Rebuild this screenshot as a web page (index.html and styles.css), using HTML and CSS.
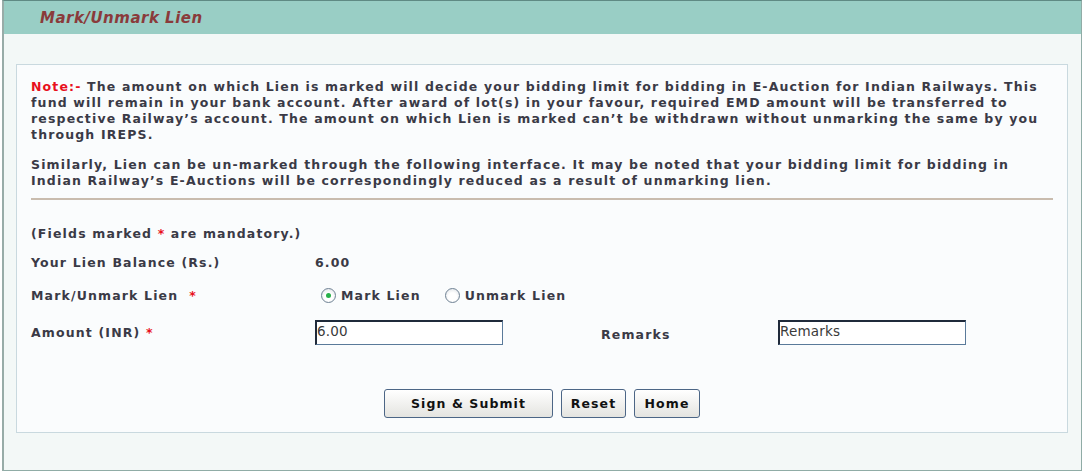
FILE: index.html
```html
<!DOCTYPE html>
<html>
<head>
<meta charset="utf-8">
<link rel="stylesheet" href="styles.css">
</head>
<body>
<div class="frame">
  <div class="header"><span class="title">Mark/Unmark Lien</span></div>
  <div class="content">
    <div class="panel">
      <p class="note"><span class="red">Note:-</span> The amount on which Lien is marked will decide your bidding limit for bidding in E-Auction for Indian Railways. This fund will remain in your bank account. After award of lot(s) in your favour, required EMD amount will be transferred to respective Railway’s account. The amount on which Lien is marked can’t be withdrawn without unmarking the same by you through IREPS.</p>
      <p class="note second">Similarly, Lien can be un-marked through the following interface. It may be noted that your bidding limit for bidding in Indian Railway’s E-Auctions will be correspondingly reduced as a result of unmarking lien.</p>
      <div class="rule"></div>
      <div class="row mandatory"><span>(Fields marked <span class="red">*</span> are mandatory.)</span></div>
      <div class="row balance">
        <div class="label">Your Lien Balance (Rs.)</div>
        <div class="value">6.00</div>
      </div>
      <div class="row mark">
        <div class="label">Mark/Unmark Lien &nbsp;<span class="red">*</span></div>
        <div class="value radios">
          <label class="radio"><span class="dot checked"></span>Mark Lien</label>
          <label class="radio"><span class="dot"></span>Unmark Lien</label>
        </div>
      </div>
      <div class="row amount">
        <div class="label">Amount (INR) <span class="red">*</span></div>
        <div class="value"><input class="field" type="text" value="6.00"></div>
        <div class="label2">Remarks</div>
        <div class="value2"><input class="field" type="text" value="Remarks"></div>
      </div>
      <div class="buttons">
        <button class="btn wide">Sign &amp; Submit</button>
        <button class="btn reset">Reset</button>
        <button class="btn home">Home</button>
      </div>
    </div>
  </div>
</div>
</body>
</html>
```
FILE: styles.css
```css
html, body {
  margin: 0;
  padding: 0;
  background: #ffffff;
}
body {
  font-family: "DejaVu Sans", Verdana, sans-serif;
  font-size: 12.5px;
  font-weight: bold;
  letter-spacing: 1.15px;
  color: #3a3a46;
}
.frame {
  margin: 0 2px;
  height: 471px;
  box-sizing: border-box;
  border: 1px solid #90aca6;
  border-top: 1px solid #5f8a84;
  border-left: 2px solid #98aca8;
  display: flex;
  flex-direction: column;
  background: #f3f8f7;
}
.header {
  height: 33px;
  background: #99cec5;
  display: flex;
  align-items: center;
  padding-left: 36px;
  flex: none;
}
.title {
  font-style: italic;
  font-size: 15px;
  letter-spacing: 0.5px;
  color: #8a3b3b;
}
.content {
  padding: 30px 13px 0 12px;
}
.panel {
  background: #fafcfd;
  border: 1px solid #c9d9df;
  height: 369px;
  box-sizing: border-box;
  padding: 14px 14px 0 14px;
}
.note {
  margin: 0;
  line-height: 16px;
}
.second {
  margin-top: 14px;
}
.red {
  color: #e8101c;
}
.rule {
  margin-top: 9px;
  height: 0;
  border-top: 2px solid #c9bcae;
}
.row {
  display: flex;
  align-items: center;
}
.mandatory {
  margin-top: 25px;
  height: 16px;
}
.balance {
  margin-top: 13px;
  height: 16px;
}
.mark {
  margin-top: 17px;
  height: 16px;
}
.amount {
  margin-top: 17px;
  height: 25px;
}
.label {
  width: 284px;
  flex: none;
}
.value {
  flex: none;
}
.radios {
  display: flex;
  gap: 24px;
  padding-left: 6px;
}
.radio {
  display: flex;
  align-items: center;
}
.dot {
  width: 15px;
  height: 15px;
  border: 1px solid #6f8294;
  border-radius: 50%;
  box-sizing: border-box;
  background: radial-gradient(circle at 50% 60%, #ffffff 40%, #d8dde2 100%);
  margin-right: 5px;
  position: relative;
}
.dot.checked::after {
  content: "";
  position: absolute;
  left: 4px;
  top: 4px;
  width: 5px;
  height: 5px;
  border-radius: 50%;
  background: #28b04a;
}
.field {
  width: 188px;
  height: 25px;
  box-sizing: border-box;
  border-top: 2px solid #1f2a3a;
  border-left: 2px solid #1f2a3a;
  border-right: 1px solid #5a7a9a;
  border-bottom: 1px solid #5a7a9a;
  background: #ffffff;
  font-family: "DejaVu Sans", Verdana, sans-serif;
  font-weight: normal;
  font-size: 13.5px;
  letter-spacing: 0.2px;
  color: #3a3a3a;
  padding: 0 0 4px 0;
  margin: 0;
}
.label2 {
  margin-left: 98px;
  width: 177px;
  flex: none;
  padding-top: 4px;
}
.buttons {
  display: flex;
  justify-content: center;
  gap: 8px;
  margin-top: 44px;
}
.btn {
  font-family: "DejaVu Sans", Verdana, sans-serif;
  font-weight: bold;
  font-size: 12.5px;
  letter-spacing: 1.1px;
  color: #111;
  height: 29px;
  padding: 0;
  border: 1px solid #4c6686;
  border-radius: 3px;
  background: linear-gradient(#ffffff, #e4e4e0);
}
.btn.wide {
  width: 169px;
}
.btn.reset {
  width: 65px;
}
.btn.home {
  width: 66px;
}
```
